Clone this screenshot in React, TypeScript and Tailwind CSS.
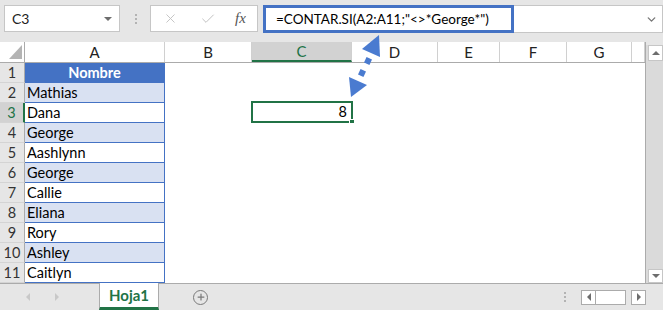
import { Check, ChevronDown, Plus, X } from "lucide-react";

const cols = [
  { label: "A", w: "w-[140px]" },
  { label: "B", w: "w-[87px]" },
  { label: "C", w: "w-[100px]" },
  { label: "D", w: "w-[86px]" },
  { label: "E", w: "w-[62px]" },
  { label: "F", w: "w-[67px]" },
  { label: "G", w: "w-[65px]" },
  { label: "", w: "w-[13px]" },
];

const names = [
  "Mathias",
  "Dana",
  "George",
  "Aashlynn",
  "George",
  "Callie",
  "Eliana",
  "Rory",
  "Ashley",
  "Caitlyn",
];

const cellFont = { fontFamily: "Lato, 'Liberation Sans', sans-serif" };

function TopBar() {
  return (
    <div className="flex h-[42px] shrink-0 items-start pt-[5px]">
      <div className="ml-[4px] flex h-[27px] w-[116px] items-center justify-between border border-[#c6c6c6] bg-white pl-[7px] pr-[7px] text-[14px] text-[#222]">
        <span>C3</span>
        <span className="h-0 w-0 border-x-[4px] border-t-[4px] border-x-transparent border-t-[#6d6d6d]" />
      </div>
      <div className="ml-[15px] mt-[9px] flex flex-col gap-[2px]">
        <span className="h-[2px] w-[2px] bg-[#b3b3b3]" />
        <span className="h-[2px] w-[2px] bg-[#b3b3b3]" />
        <span className="h-[2px] w-[2px] bg-[#b3b3b3]" />
      </div>
      <div className="ml-[13px] flex h-[27px] w-[108px] items-center border border-[#c6c6c6] bg-white text-[#c2c2c2]">
        <X className="ml-[12px] h-[15px] w-[15px]" strokeWidth={1.5} />
        <Check className="ml-[22px] h-[16px] w-[16px]" strokeWidth={1.5} />
        <span
          className="ml-[19px] text-[15px] italic text-[#555]"
          style={{ fontFamily: "'Liberation Serif', serif" }}
        >
          fx
        </span>
      </div>
      <div className="ml-[5px] flex h-[28px] flex-1 items-stretch border-y border-r border-[#c6c6c6] bg-white">
        <div
          className="-my-px flex w-[251px] shrink-0 items-center whitespace-nowrap border-[3px] border-[#4472c4] pl-[10px] text-[13.5px] text-black"
          style={cellFont}
        >
          =CONTAR.SI(A2:A11;"&lt;&gt;*George*")
        </div>
        <div className="flex flex-1 items-center justify-end pr-[4px]">
          <ChevronDown className="h-[13px] w-[13px] text-[#777]" strokeWidth={2.5} />
        </div>
      </div>
    </div>
  );
}

function HeaderRow() {
  return (
    <div className="flex h-[21px] shrink-0 border-b border-[#ababab] text-[15px] text-[#222]">
      <div className="relative w-[25px] shrink-0 border-r border-[#ababab]">
        <svg className="absolute left-0 top-0" width="25" height="21">
          <polygon points="9,17 22,17 22,3" fill="#b4b4b4" />
        </svg>
      </div>
      {cols.map((c) => (
        <div
          key={c.label || "h"}
          className={`${c.w} flex shrink-0 items-center justify-center border-r border-[#d0d0d0] ${
            c.label === "C" ? "border-b-2 border-b-[#217346] bg-[#d2d2d2] text-[#217346]" : ""
          }`}
        >
          {c.label}
        </div>
      ))}
    </div>
  );
}

function DataRow({ n, name }: { n: number; name: string }) {
  const selected = n === 3;
  const header = n === 1;
  const shaded = !header && n % 2 === 0;
  return (
    <div className="relative flex h-[20px] shrink-0 text-[14.5px]" style={cellFont}>
      <div
        className={`flex w-[25px] shrink-0 items-center justify-center border-b border-[#d4d4d4] ${
          selected
            ? "border-r-2 border-r-[#217346] bg-[#d2d2d2] text-[#217346]"
            : "border-r border-r-[#ababab] bg-[#e6e6e6] text-[#333]"
        }`}
      >
        {n}
      </div>
      <div
        className={`flex w-[140px] shrink-0 items-center border-b border-r border-[#4472c4] ${
          header
            ? "justify-center bg-[#4472c4] font-bold text-white"
            : shaded
              ? "bg-[#d9e1f2] pl-[2px] text-black"
              : "bg-white pl-[2px] text-black"
        }`}
      >
        {name}
      </div>
      <div className="flex-1 bg-white" />
      {selected && (
        <div className="absolute left-[251px] top-[-2px] flex h-[22px] w-[102px] items-center justify-end border-2 border-[#217346] pr-[4px] text-black">
          8
          <span className="absolute -bottom-[4px] -right-[4px] h-[6px] w-[6px] border border-white bg-[#217346]" />
        </div>
      )}
    </div>
  );
}

function VScroll() {
  return (
    <div className="flex w-[17px] shrink-0 flex-col">
      <div className="h-[3px] bg-[#e6e6e6]" />
      <div className="flex flex-1 flex-col bg-[#dadada] pl-[2px]">
        <div className="flex h-[16px] items-center justify-center border border-[#c6c6c6] bg-white">
          <span className="h-0 w-0 border-x-[4px] border-b-[4px] border-x-transparent border-b-[#6d6d6d]" />
        </div>
        <div className="flex-1" />
        <div className="flex h-[14px] items-center justify-center border border-[#c6c6c6] bg-white">
          <span className="h-0 w-0 border-x-[4px] border-t-[4px] border-x-transparent border-t-[#6d6d6d]" />
        </div>
      </div>
    </div>
  );
}

function TabBar() {
  return (
    <div className="flex h-[27px] shrink-0 items-stretch bg-[#e6e6e6]">
      <div className="flex w-[99px] items-center gap-[25px] border-t border-[#ababab] pl-[26px]">
        <span className="h-0 w-0 border-y-[4px] border-r-[4px] border-y-transparent border-r-[#c8c8c8]" />
        <span className="h-0 w-0 border-y-[4px] border-l-[4px] border-y-transparent border-l-[#c8c8c8]" />
      </div>
      <div
        className="flex w-[60px] items-center justify-center border-x border-b-[3px] border-x-[#ababab] border-b-[#217346] bg-white text-[15px] font-bold text-[#217346]"
        style={cellFont}
      >
        Hoja1
      </div>
      <div className="flex flex-1 items-center border-t border-[#ababab]">
        <div className="ml-[34px] flex h-[15px] w-[15px] items-center justify-center rounded-full border-[1.5px] border-[#7a7a7a]">
          <Plus className="h-[10px] w-[10px] text-[#7a7a7a]" strokeWidth={3} />
        </div>
        <div className="ml-auto flex items-center">
          <div className="flex flex-col gap-[2px]">
            <span className="h-[2px] w-[2px] bg-[#b3b3b3]" />
            <span className="h-[2px] w-[2px] bg-[#b3b3b3]" />
            <span className="h-[2px] w-[2px] bg-[#b3b3b3]" />
          </div>
          <div className="ml-[15px] flex h-[15px] w-[15px] items-center justify-center border border-[#ababab] bg-white">
            <span className="h-0 w-0 border-y-[4px] border-r-[4px] border-y-transparent border-r-[#6d6d6d]" />
          </div>
          <div className="h-[15px] w-[30px] border-y border-r border-[#ababab] bg-white" />
          <div className="ml-[5px] flex h-[15px] w-[15px] items-center justify-center border border-[#ababab] bg-white">
            <span className="h-0 w-0 border-y-[4px] border-l-[4px] border-y-transparent border-l-[#6d6d6d]" />
          </div>
          <div className="w-[17px]" />
        </div>
      </div>
    </div>
  );
}

export default function App() {
  return (
    <div
      className="relative flex h-[310px] w-[663px] flex-col overflow-hidden bg-[#e6e6e6]"
      style={{ fontFamily: "Lato, 'Liberation Sans', sans-serif" }}
    >
      <TopBar />
      <div className="flex h-[241px] shrink-0">
        <div className="flex w-[646px] shrink-0 flex-col border-r border-[#ababab] bg-white">
          <HeaderRow />
          <DataRow n={1} name="Nombre" />
          {names.map((name, i) => (
            <DataRow key={i} n={i + 2} name={name} />
          ))}
        </div>
        <VScroll />
      </div>
      <TabBar />

      <svg className="pointer-events-none absolute left-0 top-0" width="663" height="310">
        <polygon points="379,35 362,49 380,57" fill="#4a7bd0" />
        <polygon points="351,97 349,77 367,85" fill="#4a7bd0" />
        <rect x="-3" y="-3" width="6" height="6" fill="#4a7bd0" transform="translate(368,61) rotate(25)" />
        <rect x="-3" y="-3" width="6" height="6" fill="#4a7bd0" transform="translate(362,73) rotate(25)" />
      </svg>
    </div>
  );
}
